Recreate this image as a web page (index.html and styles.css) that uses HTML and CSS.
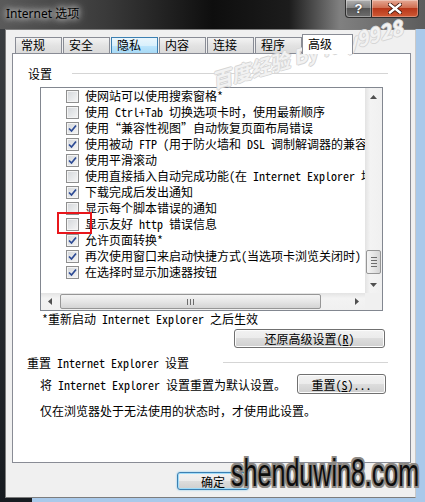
FILE: index.html
```html
<!DOCTYPE html>
<html lang="zh-CN">

<head>
    <meta charset="UTF-8">
    <title>Internet 选项</title>
    <link rel="stylesheet" href="styles.css">
</head>

<body>
    <div class="window">
        <div class="titlebar">
            <span class="title">Internet 选项</span>
            <div class="caption">
                <span class="help">?</span>
                <span class="close">
                    <svg width="14" height="11" viewBox="0 0 14 11">
                        <path d="M2 1.5L12 9.5M12 1.5L2 9.5" stroke="#3a1208" stroke-width="4" stroke-linecap="square"/>
                        <path d="M2 1.5L12 9.5M12 1.5L2 9.5" stroke="#fff" stroke-width="2.4" stroke-linecap="square"/>
                    </svg>
                </span>
            </div>
        </div>

        <div class="client">
            <nav class="tabs">
                <span class="tab">常规</span>
                <span class="tab">安全</span>
                <span class="tab hover">隐私</span>
                <span class="tab">内容</span>
                <span class="tab">连接</span>
                <span class="tab">程序</span>
                <span class="tab valgt">高级</span>
            </nav>

            <section class="panel">
                <div class="group">
                    <span>设置</span>
                    <i class="line"></i>
                </div>

                <div class="list">
                    <div class="items">
                        <div class="item"><span class="cb"></span>使网站可以使用搜索窗格*</div>
                        <div class="item"><span class="cb"></span>使用 Ctrl+Tab 切换选项卡时，使用最新顺序</div>
                        <div class="item"><span class="cb on"></span>使用“兼容性视图”自动恢复页面布局错误</div>
                        <div class="item"><span class="cb on"></span>使用被动 FTP (用于防火墙和 DSL 调制解调器的兼容性)</div>
                        <div class="item"><span class="cb on"></span>使用平滑滚动</div>
                        <div class="item"><span class="cb"></span>使用直接插入自动完成功能(在 Internet Explorer 地址栏和“运行”对话框中)</div>
                        <div class="item"><span class="cb on"></span>下载完成后发出通知</div>
                        <div class="item"><span class="cb"></span>显示每个脚本错误的通知</div>
                        <div class="item"><span class="cb"></span>显示友好 http 错误信息</div>
                        <div class="item"><span class="cb on"></span>允许页面转换*</div>
                        <div class="item"><span class="cb on"></span>再次使用窗口来启动快捷方式(当选项卡浏览关闭时)</div>
                        <div class="item"><span class="cb on"></span>在选择时显示加速器按钮</div>
                    </div>
                    <div class="vscroll">
                        <span class="arrow"><svg width="7" height="4"><path d="M0 4h7L3.5 0z" fill="#505050"/></svg></span>
                        <div class="vtrack">
                            <span class="vthumb"><i></i><i></i><i></i><i></i></span>
                        </div>
                        <span class="arrow"><svg width="7" height="4"><path d="M0 0h7L3.5 4z" fill="#505050"/></svg></span>
                    </div>
                    <div class="hscroll">
                        <span class="arrow"><svg width="4" height="7"><path d="M4 0v7L0 3.5z" fill="#505050"/></svg></span>
                        <div class="htrack">
                            <span class="hthumb"><i></i><i></i><i></i></span>
                        </div>
                        <span class="arrow"><svg width="4" height="7"><path d="M0 0v7L4 3.5z" fill="#505050"/></svg></span>
                    </div>
                    <div class="corner"></div>
                </div>

                <p class="note">*重新启动 Internet Explorer 之后生效</p>
                <div class="restore">
                    <span class="btn wide">还原高级设置(<u>R</u>)</span>
                </div>

                <div class="group reset-title">
                    <span>重置 Internet Explorer 设置</span>
                    <i class="line short"></i>
                </div>
                <div class="reset-row">
                    <span>将 Internet Explorer 设置重置为默认设置。</span>
                    <span class="btn small">重置(<u>S</u>)...</span>
                </div>
                <p class="hint">仅在浏览器处于无法使用的状态时，才使用此设置。</p>
            </section>

            <div class="footer">
                <span class="btn ok">确定</span>
            </div>
        </div>

        <div class="redbox"></div>
        <div class="mark-baidu">百度经验 By Key9928</div>
        <div class="mark-site">shenduwin8.com</div>
    </div>
</body>

</html>
```

FILE: styles.css
```css
* {
    box-sizing: border-box;
}

body {
    margin: 0;
    font-family: "Noto Sans Mono CJK SC", "Liberation Mono", "Noto Sans CJK SC", monospace;
    font-size: 12px;
    color: #000;
}

.window {
    position: relative;
    width: 425px;
    height: 502px;
    overflow: hidden;
    background:
        linear-gradient(to right, #5a5a5a, #3a3a3a 25%, #0e0e0e 50%, #1c1c1c 68%, #808080 80%, #5c5c5c) top / 100% 29px no-repeat,
        linear-gradient(to bottom, #3c3f42, #171b20) left / 5px 100% no-repeat,
        linear-gradient(#171b20, #171b20) left bottom / 32px 4px no-repeat,
        #a9c9ea;
}

/* title bar */
.titlebar {
    height: 29px;
    display: flex;
    justify-content: space-between;
    align-items: flex-start;
}

.title {
    font-family: "Noto Sans", "Noto Sans CJK SC", sans-serif;
    font-size: 12px;
    padding: 6px 0 0 6px;
    line-height: 16px;
    text-shadow: 0 0 6px #fff, 0 0 10px rgba(255, 255, 255, 0.8);
}

.caption {
    display: flex;
    margin-right: 6px;
}

.help,
.close {
    height: 18px;
    display: flex;
    align-items: center;
    justify-content: center;
    border: 1px solid #2e2e2e;
    border-top: none;
}

.help {
    width: 27px;
    border-radius: 0 0 0 4px;
    background: linear-gradient(#b0b0b0, #878787 45%, #555 50%, #6e6e6e);
    color: #fff;
    font-family: "Liberation Sans", sans-serif;
    font-weight: bold;
    font-size: 13px;
    text-shadow: 0 0 2px #222;
    box-shadow: inset 0 0 0 1px rgba(255, 255, 255, 0.35);
}

.close {
    width: 47px;
    border-left: none;
    border-radius: 0 0 4px 0;
    background: linear-gradient(#e6a995, #d06f52 45%, #b8371a 50%, #cf5a35);
    box-shadow: inset 0 0 0 1px rgba(255, 255, 255, 0.3);
}

/* dialog body */
.client {
    width: 411px;
    height: 469px;
    margin-left: 5px;
    background: #f0f0f0;
    border: 1px solid #7d7d7d;
    border-right-color: #c9c9c9;
}

.tabs {
    display: flex;
    align-items: flex-end;
    gap: 1px;
    height: 23px;
    padding-left: 9px;
}

.tab {
    width: 47px;
    height: 16px;
    padding-left: 5px;
    font-family: "Noto Sans CJK SC", sans-serif;
    font-size: 12px;
    line-height: 14px;
    border: 1px solid #898c95;
    border-bottom: none;
    background: linear-gradient(#f3f3f3, #e3e3e3 50%, #dadada);
}

.tab.hover {
    border-color: #3c7fb1;
    background: linear-gradient(#eaf6fd, #d9f0fc 50%, #bee6fd 50%, #a7d9f5);
}

.tab.valgt {
    position: relative;
    z-index: 1;
    width: 51px;
    height: 20px;
    margin-left: -1px;
    margin-bottom: -1px;
    background: #fff;
    line-height: 17px;
}

.panel {
    height: 410px;
    margin-left: 6px;
    width: 399px;
    background: #fff;
    border: 1px solid #898c95;
}

.group {
    display: flex;
    align-items: center;
    height: 16px;
    margin-top: 11px;
    padding: 0 22px 0 15px;
}

.line {
    flex: 1;
    margin-left: 20px;
    border-top: 1px solid #d5d5d5;
}

.line.short {
    flex: none;
    width: 165px;
    margin-left: auto;
}

/* settings list */
.list {
    display: grid;
    grid-template-columns: 324px 17px;
    grid-template-rows: 205px 17px;
    width: 343px;
    height: 224px;
    margin: 6px 0 0 27px;
    border: 1px solid #828790;
}

.items {
    overflow: hidden;
    white-space: nowrap;
}

.item {
    display: flex;
    align-items: center;
    height: 16px;
    line-height: 16px;
}

.cb {
    flex: none;
    width: 13px;
    height: 13px;
    margin: 0 6px 0 25px;
    border: 1px solid #8f8f8f;
    background: linear-gradient(135deg, #d3d6da, #f6f6f6);
    box-shadow: inset 0 0 0 1px #f4f4f4;
}

.cb.on {
    background:
        url("data:image/svg+xml,%3Csvg xmlns='http://www.w3.org/2000/svg' width='11' height='11'%3E%3Cpath d='M2 5.5L4.5 8L9 2.5' fill='none' stroke='%232c4a94' stroke-width='1.7'/%3E%3C/svg%3E") center no-repeat,
        linear-gradient(135deg, #d3d6da, #f6f6f6);
}

.vscroll {
    display: flex;
    flex-direction: column;
    background: linear-gradient(to right, #e3e3e3, #f3f3f3 30%, #f0f0f0);
}

.vscroll .arrow,
.hscroll .arrow {
    flex: none;
    width: 17px;
    height: 17px;
    display: flex;
    align-items: center;
    justify-content: center;
}

.vtrack {
    flex: 1;
    padding-top: 145px;
}

.vthumb {
    display: flex;
    flex-direction: column;
    align-items: center;
    justify-content: center;
    gap: 2px;
    width: 15px;
    height: 24px;
    margin-left: 1px;
    border: 1px solid #969696;
    border-radius: 2px;
    background: linear-gradient(to right, #f4f4f4, #e6e6e6 50%, #d4d4d4);
}

.vthumb i {
    width: 6px;
    border-top: 1px solid #6c6c6c;
}

.hscroll {
    display: flex;
    background: linear-gradient(#e3e3e3, #f3f3f3 30%, #f0f0f0);
}

.htrack {
    flex: 1;
    padding-left: 2px;
}

.hthumb {
    display: flex;
    align-items: center;
    justify-content: center;
    gap: 2px;
    width: 261px;
    height: 15px;
    margin-top: 1px;
    border: 1px solid #969696;
    border-radius: 2px;
    background: linear-gradient(#f4f4f4, #e6e6e6 50%, #d4d4d4);
}

.hthumb i {
    height: 6px;
    border-left: 1px solid #6c6c6c;
}

.corner {
    background: #f0f0f0;
}

.note {
    margin: 0 0 0 29px;
    line-height: 15px;
}

/* buttons */
.btn {
    display: flex;
    align-items: center;
    justify-content: center;
    border: 1px solid #707070;
    border-radius: 3px;
    background: linear-gradient(#f2f2f2, #ebebeb 50%, #dddddd 50%, #cfcfcf);
    box-shadow: inset 0 0 0 1px #fcfcfc;
}

.btn u {
    text-decoration: underline;
}

.restore {
    display: flex;
    justify-content: flex-end;
    margin-top: 3px;
    padding-right: 25px;
}

.btn.wide {
    width: 151px;
    height: 19px;
}

.reset-title {
    margin-top: 6px;
    padding-left: 14px;
}

.reset-row {
    display: flex;
    align-items: center;
    height: 20px;
    margin-top: 4px;
    padding: 0 24px 0 27px;
}

.btn.small {
    width: 89px;
    height: 20px;
    margin-left: auto;
}

.hint {
    margin: 9px 0 0 27px;
    line-height: 16px;
}

.footer {
    padding: 9px 0 0 171px;
}

.btn.ok {
    width: 72px;
    height: 18px;
    font-family: "Noto Sans CJK SC", sans-serif;
    border-color: #3c7fb1;
    box-shadow: inset 0 0 0 1px #9fdcfa, 0 0 2px #6cc2ef;
}

/* overlays */
.redbox {
    position: absolute;
    left: 57px;
    top: 212px;
    width: 35px;
    height: 22px;
    border: 2px solid #e8161b;
}

.mark-baidu {
    position: absolute;
    left: 212px;
    top: 66px;
    font-family: "Noto Sans CJK SC", sans-serif;
    font-style: italic;
    font-weight: bold;
    font-size: 20px;
    color: rgba(255, 255, 255, 0.7);
    white-space: nowrap;
    transform: rotate(-16deg);
    transform-origin: left center;
    text-shadow: 1px 0 0 #d6d6d6, -1px 0 0 #d6d6d6, 0 1px 0 #d6d6d6, 0 -1px 0 #d6d6d6;
}

.mark-site {
    position: absolute;
    left: 231px;
    top: 452px;
    font-family: "Liberation Sans", sans-serif;
    font-size: 38px;
    line-height: 42px;
    color: #0d0d0d;
    white-space: nowrap;
    transform: scaleX(0.66);
    transform-origin: left top;
    text-shadow: 2px 0 0 #8d8984, -2px 0 0 #8d8984, 0 2px 0 #8d8984, 0 -2px 0 #8d8984,
        2px 2px 0 #8d8984, -2px -2px 0 #8d8984, 2px -2px 0 #8d8984, -2px 2px 0 #8d8984;
}
```
